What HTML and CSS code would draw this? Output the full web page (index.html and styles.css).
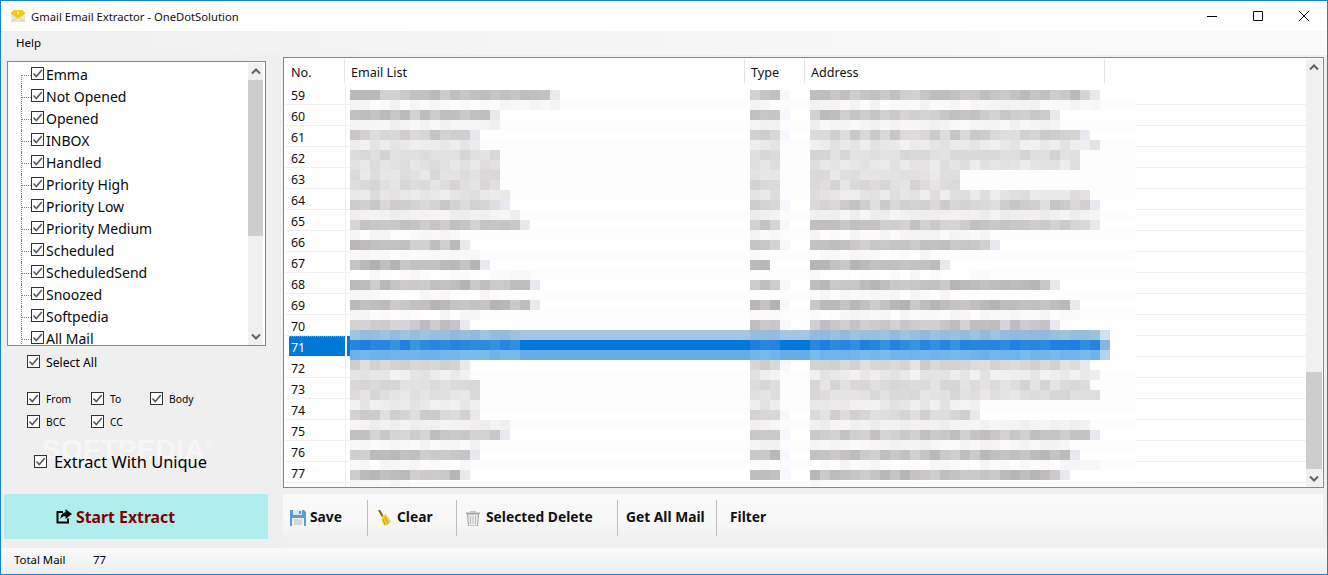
FILE: index.html
```html
<!DOCTYPE html>
<html lang="en">
<head>
<meta charset="utf-8">
<title>Gmail Email Extractor - OneDotSolution</title>
<link rel="stylesheet" href="styles.css">
</head>
<body>
<svg class="defs" width="0" height="0" aria-hidden="true">
  <symbol id="tick" viewBox="0 0 11 11"><path d="M1.5 5.5 4.3 8.5 9.8 2" fill="none" stroke="#555" stroke-width="1.5"/></symbol>
</svg>
<div class="window">
  <header class="titlebar">
    <svg class="app-icon" width="16" height="14" viewBox="0 0 16 14">
      <path d="M1 6h14v7H1z" fill="#e9e7dc"/>
      <path d="M1 13l7-5 7 5" fill="none" stroke="#cfccbd"/>
      <path d="M1 3.5 4 1h8l3 2.5V5L8 9.5 1 5z" fill="#f6c914"/>
      <path d="M7 2.5h2l-.4 3h-1.200z" fill="#fff3a8"/>
    </svg>
    <span class="app-title">Gmail Email Extractor - OneDotSolution</span>
    <div class="win-controls">
      <span class="win-btn"><svg width="10" height="10" viewBox="0 0 10 10"><path d="M0 5.500h10" stroke="#000"/></svg></span>
      <span class="win-btn"><svg width="10" height="10" viewBox="0 0 10 10"><path d="M.5.500h9v9h-9z" fill="none" stroke="#000"/></svg></span>
      <span class="win-btn"><svg width="10" height="10" viewBox="0 0 10 10"><path d="M0 0l10 10M10 0 0 10" stroke="#000"/></svg></span>
    </div>
  </header>
  <nav class="menubar"><span class="menu-item">Help</span></nav>
  <main class="main">
    <aside class="left">
      <div class="tree">
        <div class="tree-items">
          <div class="node"><span class="conn conn-first"></span><span class="check"><svg width="11" height="11"><use href="#tick"/></svg></span><span class="node-label">Emma</span></div>
          <div class="node"><span class="conn"></span><span class="check"><svg width="11" height="11"><use href="#tick"/></svg></span><span class="node-label">Not Opened</span></div>
          <div class="node"><span class="conn"></span><span class="check"><svg width="11" height="11"><use href="#tick"/></svg></span><span class="node-label">Opened</span></div>
          <div class="node"><span class="conn"></span><span class="check"><svg width="11" height="11"><use href="#tick"/></svg></span><span class="node-label">INBOX</span></div>
          <div class="node"><span class="conn"></span><span class="check"><svg width="11" height="11"><use href="#tick"/></svg></span><span class="node-label">Handled</span></div>
          <div class="node"><span class="conn"></span><span class="check"><svg width="11" height="11"><use href="#tick"/></svg></span><span class="node-label">Priority High</span></div>
          <div class="node"><span class="conn"></span><span class="check"><svg width="11" height="11"><use href="#tick"/></svg></span><span class="node-label">Priority Low</span></div>
          <div class="node"><span class="conn"></span><span class="check"><svg width="11" height="11"><use href="#tick"/></svg></span><span class="node-label">Priority Medium</span></div>
          <div class="node"><span class="conn"></span><span class="check"><svg width="11" height="11"><use href="#tick"/></svg></span><span class="node-label">Scheduled</span></div>
          <div class="node"><span class="conn"></span><span class="check"><svg width="11" height="11"><use href="#tick"/></svg></span><span class="node-label">ScheduledSend</span></div>
          <div class="node"><span class="conn"></span><span class="check"><svg width="11" height="11"><use href="#tick"/></svg></span><span class="node-label">Snoozed</span></div>
          <div class="node"><span class="conn"></span><span class="check"><svg width="11" height="11"><use href="#tick"/></svg></span><span class="node-label">Softpedia</span></div>
          <div class="node"><span class="conn"></span><span class="check"><svg width="11" height="11"><use href="#tick"/></svg></span><span class="node-label">All Mail</span></div>
        </div>
        <div class="scrollbar tree-scroll">
          <span class="arrow"><svg width="10" height="7" viewBox="0 0 10 7"><path d="M1 5.500 5 1.500l4 4" fill="none" stroke="#606060" stroke-width="2"/></svg></span>
          <div class="track"><div class="thumb tree-thumb"></div></div>
          <span class="arrow"><svg width="10" height="7" viewBox="0 0 10 7"><path d="M1 1.500l4 4 4-4" fill="none" stroke="#606060" stroke-width="2"/></svg></span>
        </div>
      </div>
      <label class="opt opt-all"><span class="check"><svg width="11" height="11"><use href="#tick"/></svg></span><span class="opt-label">Select All</span></label>
      <div class="fields">
        <label class="opt"><span class="check"><svg width="11" height="11"><use href="#tick"/></svg></span><span class="field-label">From</span></label>
        <label class="opt"><span class="check"><svg width="11" height="11"><use href="#tick"/></svg></span><span class="field-label">To</span></label>
        <label class="opt"><span class="check"><svg width="11" height="11"><use href="#tick"/></svg></span><span class="field-label">Body</span></label>
        <label class="opt"><span class="check"><svg width="11" height="11"><use href="#tick"/></svg></span><span class="field-label">BCC</span></label>
        <label class="opt"><span class="check"><svg width="11" height="11"><use href="#tick"/></svg></span><span class="field-label">CC</span></label>
      </div>
      <label class="opt opt-unique"><span class="check"><svg width="11" height="11"><use href="#tick"/></svg></span><span class="unique-label">Extract With Unique</span></label>
      <div class="watermark">SOFTPEDIA<sup class="reg">®</sup></div>
      <button class="start-btn" type="button">
        <svg width="16" height="15" viewBox="0 0 16 15">
          <path d="M7 3H1.500v10.500H12V9.500" fill="none" stroke="#000" stroke-width="2"/>
          <path d="M9.500 0 16 5l-6.500 5V7C7 7 5.500 8 4.500 10c0-4 2-6.500 5-6.500z" fill="#000"/>
        </svg>
        <span>Start Extract</span>
      </button>
    </aside>
    <section class="right">
      <div class="list">
        <div class="list-area">
          <div class="list-head">
            <span class="hcell h-no">No.</span>
            <span class="hcell h-email">Email List</span>
            <span class="hcell h-type">Type</span>
            <span class="hcell h-addr">Address</span>
          </div>
          <div class="rows">
            <div class="row"><span class="num">59</span><span class="rest"></span></div>
            <div class="row"><span class="num">60</span><span class="rest"></span></div>
            <div class="row"><span class="num">61</span><span class="rest"></span></div>
            <div class="row"><span class="num">62</span><span class="rest"></span></div>
            <div class="row"><span class="num">63</span><span class="rest"></span></div>
            <div class="row"><span class="num">64</span><span class="rest"></span></div>
            <div class="row"><span class="num">65</span><span class="rest"></span></div>
            <div class="row"><span class="num">66</span><span class="rest"></span></div>
            <div class="row"><span class="num">67</span><span class="rest"></span></div>
            <div class="row"><span class="num">68</span><span class="rest"></span></div>
            <div class="row"><span class="num">69</span><span class="rest"></span></div>
            <div class="row"><span class="num">70</span><span class="rest"></span></div>
            <div class="row row-selected"><span class="num">71</span><span class="rest"></span></div>
            <div class="row"><span class="num">72</span><span class="rest"></span></div>
            <div class="row"><span class="num">73</span><span class="rest"></span></div>
            <div class="row"><span class="num">74</span><span class="rest"></span></div>
            <div class="row"><span class="num">75</span><span class="rest"></span></div>
            <div class="row"><span class="num">76</span><span class="rest"></span></div>
            <div class="row"><span class="num">77</span><span class="rest"></span></div>
            <div class="row"><span class="num"></span><span class="rest"></span></div>
          </div>
          <canvas class="mosaic" id="mosaic" width="785" height="397"></canvas>
        </div>
        <div class="scrollbar list-scroll">
          <span class="arrow"><svg width="10" height="7" viewBox="0 0 10 7"><path d="M1 5.500 5 1.500l4 4" fill="none" stroke="#606060" stroke-width="2"/></svg></span>
          <div class="track"><div class="thumb list-thumb"></div></div>
          <span class="arrow"><svg width="10" height="7" viewBox="0 0 10 7"><path d="M1 1.500l4 4 4-4" fill="none" stroke="#606060" stroke-width="2"/></svg></span>
        </div>
      </div>
      <div class="toolbar">
        <div class="tool tool-save">
          <svg width="16" height="16" viewBox="0 0 16 16">
            <path d="M0 0h14l2 2v14H0z" fill="#5a9bd8"/>
            <path d="M3 0h9v5H3z" fill="#dfe9f3"/>
            <path d="M9 1h2v3H9z" fill="#5a9bd8"/>
            <path d="M2 8h12v8H2z" fill="#f1f4f7"/>
            <path d="M4 10h8M4 12h8M4 14h8" stroke="#aebccb"/>
          </svg>
          <span class="tool-text">Save</span>
        </div>
        <div class="tool tool-clear">
          <svg width="14" height="16" viewBox="0 0 14 16">
            <path d="M1 0 5 7" stroke="#8a5a20" stroke-width="2"/>
            <path d="M4 6l4-2 5 8-5 3.500H6L4 11z" fill="#f2cf2e"/>
            <path d="M7 7l3 7M5 9l2 6" stroke="#c79c12"/>
          </svg>
          <span class="tool-text">Clear</span>
        </div>
        <div class="tool tool-delete">
          <svg width="14" height="16" viewBox="0 0 14 16">
            <path d="M0 2.500h14V4H0z" fill="#a8a8a8"/>
            <path d="M4 1h6v1.500H4z" fill="#c4c4c4"/>
            <path d="M1.500 4h11l-1 12h-9z" fill="#ececec" stroke="#a0a0a0"/>
            <path d="M4.500 6v8M7 6v8M9.500 6v8" stroke="#bcbcbc"/>
          </svg>
          <span class="tool-text">Selected Delete</span>
        </div>
        <div class="tool tool-all"><span class="tool-text">Get All Mail</span></div>
        <div class="tool tool-filter"><span class="tool-text">Filter</span></div>
      </div>
    </section>
  </main>
  <footer class="statusbar"><span class="status-label">Total Mail</span><span>77</span></footer>
</div>
<script src="script.js"></script>
</body>
</html>
```
FILE: styles.css
```css
* { box-sizing: border-box; }
html, body { margin: 0; padding: 0; }
body {
  width: 1328px;
  height: 575px;
  overflow: hidden;
  font-family: "Noto Sans", "Open Sans", sans-serif;
  font-size: 12px;
  color: #000;
  background: #f0f0f0;
}
.defs { display: block; height: 0; }
.window {
  display: flex;
  flex-direction: column;
  width: 1328px;
  height: 575px;
  border: 1px solid #1883d7;
  background: #f0f0f0;
}
.titlebar {
  display: flex;
  align-items: center;
  flex: 0 0 30px;
  background: #fff;
  padding-left: 9px;
}
.app-icon { margin-right: 5px; margin-top: -1px; }
.app-title { font-size: 11.25px; color: #111; }
.win-controls { display: flex; margin-left: auto; }
.win-btn {
  display: flex;
  align-items: center;
  justify-content: center;
  width: 46px;
  height: 29px;
}
.menubar {
  flex: 0 0 24px;
  display: flex;
  align-items: center;
  padding: 0 0 2px 15px;
  background: linear-gradient(to right, #f0f0f0, #fafafa 85%);
}
.menu-item { font-size: 11.5px; }
.main { flex: 1; display: flex; min-height: 0; }
.left {
  position: relative;
  flex: 0 0 282px;
  display: flex;
  flex-direction: column;
  background: #efefef;
}
.tree {
  display: flex;
  width: 259px;
  height: 285px;
  margin: 6px 0 0 6px;
  background: #fff;
  border: 1px solid #828790;
  overflow: hidden;
}
.tree-items { flex: 1; padding: 2px 0 0 13px; overflow: hidden; }
.node {
  display: flex;
  align-items: center;
  height: 22px;
}
.conn {
  display: flex;
  align-items: center;
  align-self: stretch;
  width: 10px;
  border-left: 1px dotted #808080;
}
.conn::after { content: ""; flex: 1; border-top: 1px dotted #808080; }
.conn-first {
  align-self: flex-end;
  height: 11px;
  align-items: flex-start;
}
.check {
  display: flex;
  flex: 0 0 13px;
  width: 13px;
  height: 13px;
  border: 1px solid #333;
  background: #fff;
  align-items: center;
  justify-content: center;
}
.node .check { margin-top: -3px; }
.node-label {
  margin: -2px 0 0 2px;
  font-size: 14px;
  color: #0a0a0a;
  white-space: nowrap;
}
.scrollbar {
  display: flex;
  flex-direction: column;
  flex: 0 0 auto;
  background: #f0f0f0;
}
.arrow {
  display: flex;
  align-items: center;
  justify-content: center;
  flex: 0 0 17px;
}
.track { flex: 1; min-height: 0; }
.thumb { background: #cdcdcd; }
.tree-scroll { width: 15px; margin: 1px 2px 0 0; }
.tree-thumb { height: 156px; }
.opt { display: flex; align-items: center; height: 13px; white-space: nowrap; }
.opt-label, .field-label { margin-left: 6px; }
.opt-label { font-size: 12.2px; margin-top: 1px; }
.field-label { font-size: 10.3px; }
.opt-all { margin: 9px 0 0 26px; }
.fields {
  display: grid;
  grid-template-columns: 64px 59px auto;
  row-gap: 10px;
  margin: 24px 0 0 26px;
}
.opt-unique { margin: 27px 0 0 33px; position: relative; z-index: 1; }
.unique-label { margin-left: 7px; font-size: 16.4px; }
.watermark {
  position: absolute;
  left: 41px;
  top: 379px;
  font-family: "Liberation Sans", sans-serif;
  font-size: 28px;
  font-weight: 700;
  line-height: 32px;
  letter-spacing: .3px;
  color: #f6f6f6;
  white-space: nowrap;
}
.reg { font-size: 11px; font-weight: 400; vertical-align: 12px; line-height: 0; }
.start-btn {
  display: flex;
  align-items: center;
  width: 264px;
  height: 45px;
  margin: 26px 0 0 3px;
  padding: 0 0 0 52px;
  border: 0;
  border-radius: 2px;
  background: #b0eeee;
  font: 700 15.8px "Noto Sans", sans-serif;
  color: #800000;
  gap: 4px;
}
.right {
  flex: 1;
  min-width: 0;
  display: flex;
  flex-direction: column;
  padding: 2px 0 0 0;
}
.list {
  display: flex;
  width: 1041px;
  height: 431px;
  background: #fff;
  border: 1px solid #828790;
  overflow: hidden;
}
.list-area { position: relative; flex: 1; min-width: 0; overflow: hidden; }
.list-head { display: flex; height: 26px; padding-top: 1px; }
.hcell {
  display: flex;
  align-items: center;
  height: 24px;
  padding-top: 2px;
  border-right: 1px solid #e5e5e5;
  font-size: 12.6px;
  color: #111;
}
.h-no { width: 61px; padding-left: 7px; }
.h-email { width: 400px; padding-left: 6px; }
.h-type { width: 60px; padding-left: 6px; }
.h-addr { width: 300px; padding-left: 6px; }
.rows { display: flex; flex-direction: column; }
.row {
  display: flex;
  flex: 0 0 21px;
  height: 21px;
  margin-left: 1px;
  padding-left: 4px;
  border-bottom: 1px solid #f0f0f0;
}
.num {
  display: block;
  width: 57px;
  padding: 2px 0 0 2px;
  border-right: 1px solid #f0f0f0;
  line-height: 20px;
  font-size: 12.4px;
  color: #111;
}
.rest { width: 758px; margin-left: 1px; }
.row-selected .num {
  background: #0078d7;
  color: #fff;
  border-top: 1px dotted #f08a24;
  border-right-color: #fff;
  padding-top: 1px;
}
.row-selected .rest { background: #0078d7; }
.mosaic {
  position: absolute;
  left: 66px;
  top: 32px;
  width: 785px;
  height: 397px;
}
.list-scroll { width: 16px; margin: 1px 1px 0 0; }
.list-thumb { height: 97px; margin-top: 296px; }
.toolbar {
  display: flex;
  align-items: center;
  width: 1040px;
  height: 47px;
  margin-top: 6px;
  border-radius: 2px;
  background: linear-gradient(to bottom, #fafafa, #f7f7f7 60%, #efefef);
  font-weight: 700;
  font-size: 13.8px;
  color: #111;
}
.tool {
  display: flex;
  align-items: center;
  height: 36px;
  white-space: nowrap;
  border-right: 1px solid #bdbdbd;
}
.tool-text { margin-top: -2px; }
.tool-save { width: 85px; padding-left: 7px; gap: 4px; }
.tool-clear { width: 89px; padding-left: 10px; gap: 5px; }
.tool-delete { width: 161px; padding-left: 9px; gap: 6px; }
.tool-all { width: 99px; padding-left: 8px; }
.tool-filter { padding-left: 13px; border-right: 0; }
.statusbar {
  flex: 0 0 26px;
  display: flex;
  align-items: center;
  padding: 0 0 3px 13px;
  background: linear-gradient(to bottom, #fafafa, #eeeeee);
  font-size: 11.4px;
}
.status-label { width: 79px; }
```
FILE: script.js
```js
(function () {
  var canvas = document.getElementById('mosaic');
  var ctx = canvas.getContext('2d');
  var seed = 71;
  function rnd() {
    seed = (seed * 9301 + 49297) % 233280;
    return seed / 233280;
  }
  function shade(base) {
    var spread = base < 0xd8 ? 26 : base < 0xec ? 18 : 10;
    var g = Math.round(base + (rnd() - 0.45) * spread);
    g = Math.min(255, g);
    var tint = rnd() < 0.5 ? 0 : 3;
    return 'rgb(' + (g + tint > 255 ? 255 : g + tint) + ',' + g + ',' + (g + 1 > 255 ? 255 : g + 1) + ')';
  }
  function cells(x, n, y, base, fadeLast) {
    for (var i = 0; i < n; i++) {
      var last = fadeLast && i === n - 1;
      ctx.fillStyle = last ? 'rgb(232,232,238)' : shade(base);
      ctx.fillRect(x + i * 10, y, 10, 10);
    }
  }
  /* one entry per 10px line: [email cells, type cells, address cells, darkness] */
  var lines = [
    [21, 3, 29, 0xc4], [21, 3, 29, 0xf6], [15, 3, 25, 0xc6], [15, 3, 25, 0xf3],
    [13, 3, 28, 0xd0], [13, 3, 29, 0xe9], [15, 3, 27, 0xda], [15, 3, 27, 0xe3],
    [15, 3, 15, 0xdf], [15, 3, 15, 0xdb], [16, 3, 28, 0xe3], [16, 3, 29, 0xd0],
    [17, 3, 29, 0xf0], [18, 3, 29, 0xc9], [11, 3, 18, 0xf7], [12, 3, 19, 0xc4],
    [13, 1, 13, 0xf9], [14, 2, 14, 0xbc], [18, 0, 18, 0xfb], [19, 3, 25, 0xbf],
    [15, 0, 15, 0xf9], [19, 3, 27, 0xbe], [14, 3, 27, 0xf8], [12, 3, 25, 0xc7],
    null, null, null,
    [12, 3, 28, 0xd6], [12, 3, 29, 0xe9], [13, 3, 28, 0xdb], [13, 3, 29, 0xde],
    [13, 3, 17, 0xe9], [13, 3, 17, 0xd5], [16, 3, 28, 0xf0], [16, 3, 29, 0xc8],
    [13, 3, 26, 0xf5], [13, 3, 27, 0xc3], [12, 3, 29, 0xf9], [12, 3, 26, 0xc0],
    [6, 0, 3, 0xf6]
  ];
  ctx.fillStyle = '#fdfdfd';
  ctx.fillRect(0, 0, canvas.width, 10 * 40);
  lines.forEach(function (line, index) {
    if (!line) { return; }
    var y = index * 10;
    if (line[3] < 0xd8) {
      ctx.fillStyle = '#ffffff';
      ctx.fillRect(0, y, canvas.width, 10);
    }
    cells(0, line[0], y, line[3], line[3] < 0xd8);
    cells(400, line[1], y, line[3]);
    if (line[1] === 3) {
      ctx.fillStyle = line[3] < 0xd8 ? '#f7f8fd' : '#fcfcfe';
      ctx.fillRect(430, y, 10, 10);
    }
    cells(460, line[2], y, line[3], line[3] < 0xd8);
  });
  function band(y, base, mark, spread, tail) {
    ctx.fillStyle = base;
    ctx.fillRect(0, y, 760, 10);
    ctx.fillStyle = tail;
    ctx.fillRect(750, y, 10, 10);
    [[0, 17], [40, 3], [46, 29]].forEach(function (part) {
      for (var i = 0; i < part[1]; i++) {
        var d = Math.round((rnd() - 0.5) * spread);
        ctx.fillStyle = 'rgb(' + (mark[0] + d) + ',' + (mark[1] + d) + ',' + mark[2] + ')';
        ctx.fillRect(part[0] * 10 + i * 10, y, 10, 10);
      }
    });
  }
  ctx.fillStyle = '#ffffff';
  ctx.fillRect(760, 240, 25, 30);
  band(240, '#a3c6e4', [152, 190, 222], 14, '#cfe0ee');
  band(250, '#0078d7', [42, 138, 224], 24, '#84b8e4');
  band(260, '#66ade8', [116, 182, 234], 12, '#b4d4ee');
})();
```
